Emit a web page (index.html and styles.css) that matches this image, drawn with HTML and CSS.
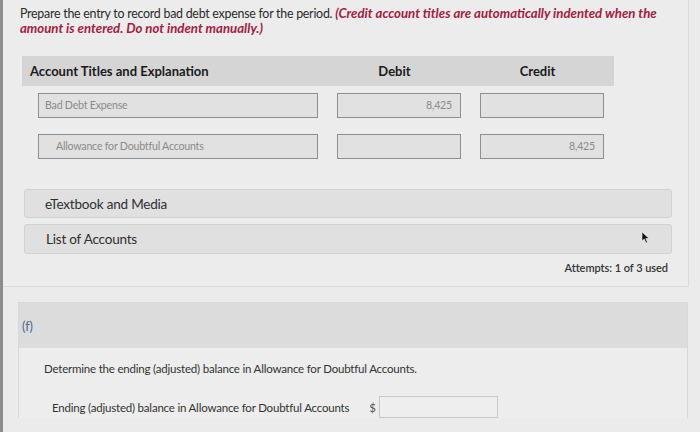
FILE: index.html
```html
<!DOCTYPE html>
<html lang="en">

<head>
    <meta charset="UTF-8">
    <meta name="viewport" content="width=device-width, initial-scale=1.0">
    <title>Bad Debt Expense</title>
    <link rel="stylesheet" href="styles.css">
</head>

<body>
    <section class="question">
        <p class="prompt">Prepare the entry to record bad debt expense for the period. <em>(Credit account titles are automatically indented when the</em> <em>amount is entered. Do not indent manually.)</em></p>

        <div class="journal">
            <div class="journal-head">
                <span class="col-account">Account Titles and Explanation</span>
                <span class="col-amount">Debit</span>
                <span class="col-amount">Credit</span>
            </div>
            <div class="journal-row">
                <div class="field account">Bad Debt Expense</div>
                <div class="field amount">8,425</div>
                <div class="field amount"></div>
            </div>
            <div class="journal-row">
                <div class="field account indented">Allowance for Doubtful Accounts</div>
                <div class="field amount"></div>
                <div class="field amount">8,425</div>
            </div>
        </div>

        <div class="resource">eTextbook and Media</div>
        <div class="resource resource-list">
            List of Accounts
            <svg class="cursor" width="9" height="13" viewBox="0 0 9 13">
                <path d="M1 1 L1 10 L3.3 8 L5 12 L6.4 11.3 L4.8 7.6 L8 7.4 Z" fill="#111" stroke="#eee" stroke-width="0.6"/>
            </svg>
        </div>
        <p class="attempts">Attempts: 1 of 3 used</p>
    </section>

    <section class="part">
        <div class="part-head">(f)</div>
        <div class="part-body">
            <p class="part-text">Determine the ending (adjusted) balance in Allowance for Doubtful Accounts.</p>
            <div class="answer">
                <span>Ending (adjusted) balance in Allowance for Doubtful Accounts</span>
                <span class="dollar">$</span>
                <div class="answer-box"></div>
            </div>
        </div>
    </section>
</body>

</html>
```

FILE: styles.css
```css
* {
    box-sizing: border-box;
    margin: 0;
    padding: 0;
}

body {
    font-family: Lato, 'Open Sans', sans-serif;
    color: #2a2a2a;
    background-color: #ebebeb;
    border-left: 3px solid #8c8c8c;
    height: 432px;
    overflow: hidden;
}

.question {
    width: 686px;
    height: 287px;
    padding: 6px 0 0 17px;
    border-right: 1px solid #dadada;
    border-bottom: 1px solid #dadada;
    background-color: #ececec;
}

.prompt {
    font-size: 12.4px;
    line-height: 15px;
    height: 30px;
    width: 670px;
    letter-spacing: -0.25px;
}

.prompt em {
    font-size: 13.2px;
    line-height: 15px;
    vertical-align: top;
    color: #a3203e;
    font-weight: bold;
    font-style: italic;
    letter-spacing: 0;
}

.journal {
    margin: 20px 0 0 2px;
    width: 592px;
}

.journal-head {
    display: grid;
    grid-template-columns: 306px 143px 143px;
    align-items: center;
    height: 30px;
    background-color: #d5d5d5;
    font-size: 13px;
    font-weight: bold;
    color: #1a1a1a;
}

.col-account {
    padding-left: 8px;
}

.col-amount {
    text-align: center;
    padding-right: 10px;
}

.journal-row {
    display: grid;
    grid-template-columns: 280px 124px 124px;
    column-gap: 19px;
    margin: 7px 0 0 16px;
    height: 25px;
}

.journal-row + .journal-row {
    margin-top: 16px;
}

.field {
    background-color: #e1e1e1;
    border: 1px solid #8e8e8e;
    font-size: 10.6px;
    color: #8a8a8a;
    line-height: 23px;
    letter-spacing: -0.2px;
}

.account {
    padding-left: 6px;
}

.account.indented {
    padding-left: 17px;
}

.amount {
    text-align: right;
    padding-right: 8px;
}

.resource {
    display: flex;
    align-items: center;
    justify-content: space-between;
    width: 648px;
    height: 29px;
    margin: 30px 0 0 4px;
    padding: 0 21px 0 20px;
    background-color: #e0e0e0;
    border: 1px solid #d2d2d2;
    border-radius: 3px;
    font-size: 13.5px;
    color: #2f2f2f;
    letter-spacing: -0.2px;
}

.resource-list {
    margin-top: 6px;
    height: 30px;
    padding-left: 21px;
}

.cursor {
    margin-bottom: 4px;
}

.attempts {
    width: 648px;
    margin-top: 7px;
    text-align: right;
    font-size: 11px;
    font-weight: 600;
    color: #333;
    letter-spacing: -0.05px;
}

.part {
    width: 670px;
    margin: 15px 0 0 15px;
    background-color: #ededed;
    border: 1px solid #d8d8d8;
    border-bottom: none;
}

.part-head {
    height: 45px;
    background-color: #dcdcdc;
    padding: 16px 0 0 3px;
    font-size: 12.5px;
    color: #4f6590;
}

.part-body {
    padding: 14px 0 0 25px;
    font-size: 11.5px;
    color: #333;
    letter-spacing: -0.2px;
}

.part-text {
    line-height: 14px;
}

.answer {
    display: flex;
    align-items: center;
    margin: 20px 0 0 8px;
}

.dollar {
    margin-left: 20px;
    color: #555;
}

.answer-box {
    width: 119px;
    height: 22px;
    margin-left: 3px;
    background-color: #eeeeee;
    border: 1px solid #c8c8c8;
}
```
